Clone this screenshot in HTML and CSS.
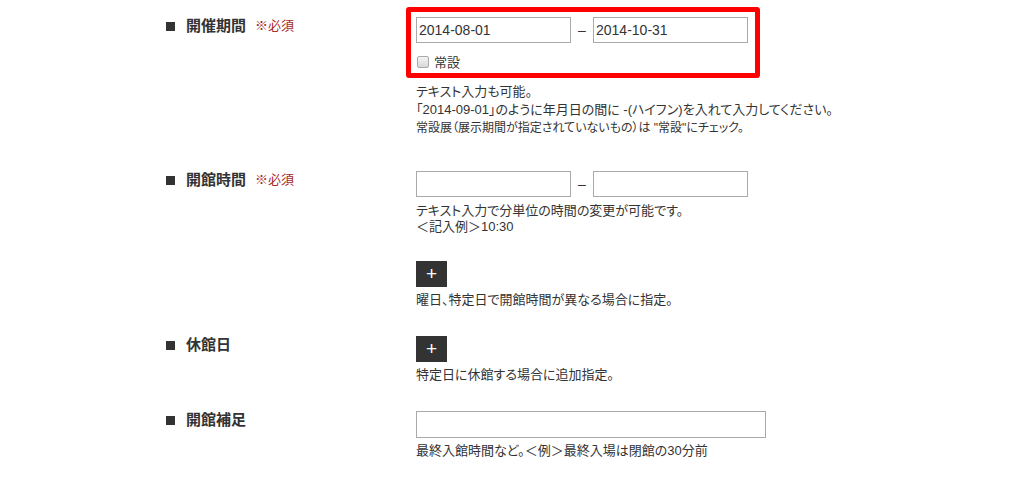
FILE: index.html
```html
<!DOCTYPE html>
<html>
<head>
    <meta charset="utf-8">
    <link rel="stylesheet" href="styles.css">
</head>
<body>
    <div class="container">
        <div class="row">
            <div class="label">開催期間<span class="required">※必須</span></div>
            <div class="field">
                <div class="highlight">
                    <div class="range">
                        <input type="text" class="text-input" value="2014-08-01">
                        <span class="dash">–</span>
                        <input type="text" class="text-input" value="2014-10-31">
                    </div>
                    <label class="check">
                        <input type="checkbox" class="check-box">常設
                    </label>
                </div>
                <p class="help help-wide">テキスト入力も可能。<br>「2014-09-01」のように年月日の間に -(ハイフン)を入れて入力してください。<br><span class="tight">常設展（展示期間が指定されていないもの）は "常設"にチェック。</span></p>
            </div>
        </div>

        <div class="row row-hours">
            <div class="label">開館時間<span class="required">※必須</span></div>
            <div class="field">
                <div class="range">
                    <input type="text" class="text-input">
                    <span class="dash">–</span>
                    <input type="text" class="text-input">
                </div>
                <p class="help">テキスト入力で分単位の時間の変更が可能です。<br>＜記入例＞10:30</p>
                <button class="add-button add-spaced">+</button>
                <p class="help">曜日、特定日で開館時間が異なる場合に指定。</p>
            </div>
        </div>

        <div class="row">
            <div class="label">休館日</div>
            <div class="field">
                <button class="add-button">+</button>
                <p class="help">特定日に休館する場合に追加指定。</p>
            </div>
        </div>

        <div class="row">
            <div class="label">開館補足</div>
            <div class="field">
                <input type="text" class="text-input text-input-long">
                <p class="help">最終入館時間など。＜例＞最終入場は閉館の30分前</p>
            </div>
        </div>
    </div>
</body>
</html>
```

FILE: styles.css
```css
body {
    margin: 0;
    background-color: #fff;
    color: #333;
    font-family: "Liberation Sans", "Noto Sans CJK JP", sans-serif;
    font-feature-settings: "palt";
}
.container {
    width: 700px;
    margin: 0 auto;
    padding-top: 17px;
}
.row {
    display: flex;
    align-items: flex-start;
    margin-top: 28px;
}
.row:first-child {
    margin-top: 0;
}
.row-hours {
    margin-top: 34px;
}
.label {
    width: 250px;
    flex: none;
    display: flex;
    align-items: center;
    font-size: 15px;
    font-weight: bold;
    line-height: 18px;
    color: #333;
}
.label::before {
    content: "";
    width: 9px;
    height: 9px;
    background-color: #333;
    margin-right: 11px;
}
.required {
    margin-left: 9px;
    font-size: 13px;
    font-weight: normal;
    color: #a52a2a;
}
.field {
    flex: 1;
}
.highlight {
    display: inline-block;
    margin: -10px 0 5px -10px;
    padding: 5px 7px 5px 5px;
    border: 5px solid #f00;
    border-radius: 3px;
}
.range {
    display: flex;
    align-items: center;
}
.text-input {
    width: 155px;
    height: 26px;
    box-sizing: border-box;
    margin: 0;
    padding: 0 2px;
    border: 1px solid #aaa;
    font-family: "Liberation Sans", sans-serif;
    font-size: 14px;
    color: #333;
    outline: none;
}
.text-input-long {
    width: 350px;
    height: 27px;
}
.dash {
    width: 22px;
    text-align: center;
    font-size: 14px;
    color: #333;
}
.check {
    display: flex;
    align-items: center;
    margin-top: 12px;
    height: 13px;
    font-size: 13px;
    color: #333;
}
.check-box {
    appearance: none;
    width: 12px;
    height: 12px;
    margin: 0 5px 0 1px;
    border: 1px solid #aaa;
    border-radius: 2px;
    background: linear-gradient(#f4f4f4, #d8d8d8);
}
.help {
    margin: 6px 0 0;
    font-size: 13px;
    line-height: 16px;
    color: #333;
}
.help-wide {
    margin-top: 0;
    line-height: 18px;
}
.tight {
    font-size: 12px;
}
.add-button {
    display: block;
    width: 31px;
    height: 26px;
    margin: 0;
    padding: 0;
    border: none;
    background-color: #333;
    color: #fff;
    font-family: "Liberation Sans", sans-serif;
    font-size: 19px;
    line-height: 26px;
    cursor: pointer;
}
.add-spaced {
    margin-top: 26px;
}
.add-button + .help {
    margin-top: 5px;
}
.text-input-long + .help {
    margin-top: 5px;
}
```
